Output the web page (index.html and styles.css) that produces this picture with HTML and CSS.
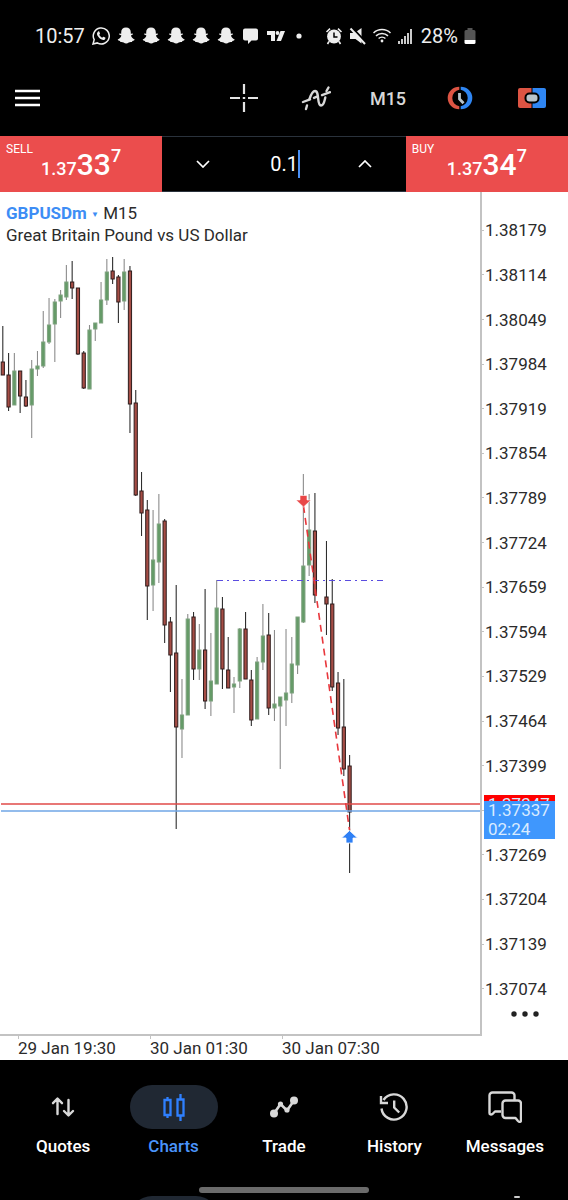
FILE: index.html
```html
<!DOCTYPE html>
<html lang="en">
<head>
  <meta charset="UTF-8">
  <title>GBPUSDm M15</title>
  <meta name="viewport" content="width=device-width, initial-scale=1">
  <link rel="stylesheet" href="styles.css">
</head>
<body>

<!-- Shared icons -->
<svg class="defs" aria-hidden="true">
  <symbol id="ghost" viewBox="0 0 18 18">
    <path fill="#eee" d="M9 .5c3 0 4.800 2 4.800 4.800v1.400l1.800-.3.500.9-2.100 1.200c.4 1.700 1.600 3.200 3.700 3.900-.1.900-1.200 1.300-2.300 1.500l-.4 1.100c-1.600-.2-2.400 0-3.200.6-1.700 1.300-3.500 1.300-5.200 0-.8-.6-1.600-.8-3.200-.6l-.4-1.100c-1.100-.2-2.200-.6-2.300-1.500 2.100-.7 3.300-2.200 3.700-3.900L1.900 7.300l.5-.9 1.800.3V5.300C4.200 2.500 6 .5 9 .5z"/>
  </symbol>
</svg>

<!-- Status bar -->
<div class="status">
  <span class="time">10:57</span>
  <svg class="s-icon" viewBox="0 0 18 18"><path fill="none" stroke="#eee" stroke-width="1.500" d="M1 17l1.200-4.300A8 8 0 1 1 5.300 15.900z"/><path fill="#eee" d="M6 4.700c.5-.5 1.100-.4 1.300.1l.7 1.600c.1.400-.6 1.100-.8 1.400.8 1.500 1.700 2.300 3.100 2.900.4-.5.9-1.100 1.200-1l1.700.8c.5.300.1 1.500-.4 1.900-1.300 1-3.200.4-4.700-.7C6.700 10.500 5.300 8.700 5 7.200c-.1-1 .4-2 1-2.500z"/></svg>
  <svg class="s-icon"><use href="#ghost"/></svg>
  <svg class="s-icon"><use href="#ghost"/></svg>
  <svg class="s-icon"><use href="#ghost"/></svg>
  <svg class="s-icon"><use href="#ghost"/></svg>
  <svg class="s-icon"><use href="#ghost"/></svg>
  <svg class="s-icon" viewBox="0 0 18 18"><path fill="#eee" d="M3 1.500h11a2 2 0 0 1 2 2v8a2 2 0 0 1-2 2h-4.500L6 17v-3.500H3a2 2 0 0 1-2-2v-8a2 2 0 0 1 2-2z"/></svg>
  <svg class="s-icon" viewBox="0 0 18 18"><path fill="#eee" d="M0 4h8v10H4V8H0z"/><circle cx="10.500" cy="6" r="1.900" fill="#eee"/><path fill="#eee" d="M13.500 4H18l-4 10H9.500z"/></svg>
  <svg class="s-icon" viewBox="0 0 18 18"><circle cx="7" cy="9" r="2.600" fill="#eee"/></svg>
  <div class="status-right">
    <svg class="s-icon" viewBox="0 0 18 18"><circle cx="9" cy="9.500" r="6.900" fill="#eee"/><path d="M9 5.500V10h3.500" fill="none" stroke="#000" stroke-width="1.500"/><path d="M1.500 5L5 1.700M16.500 5L13 1.700M4 14.500L2.500 17M14 14.500l1.500 2.500" stroke="#eee" stroke-width="1.600"/></svg>
    <svg class="s-icon" viewBox="0 0 18 18"><path fill="#eee" d="M1 6h4.500L12.500 1v15.500L6.500 12H1z"/><path d="M3 .5l15 16" stroke="#000" stroke-width="2"/><path d="M1.500 1.500l14.500 15.500" stroke="#eee" stroke-width="2"/></svg>
    <svg class="s-icon" viewBox="0 0 18 18"><g fill="none" stroke="#eee" stroke-width="1.500"><path d="M.5 6a12 12 0 0 1 17 0"/><path d="M3 8.900a8.500 8.500 0 0 1 12 0"/><path d="M5.600 11.500a5 5 0 0 1 6.800 0"/></g><circle cx="9" cy="14" r="1.400" fill="#eee"/></svg>
    <svg class="s-icon" viewBox="0 0 18 18"><path d="M2 17v-3M5 17v-5M8 17V9M11 17V6M14 17V2" stroke="#eee" stroke-width="1.700"/></svg>
    <span class="time">28%</span>
    <svg class="battery" viewBox="0 0 12 18"><path fill="#555" d="M3.500 1h5v2H10a1.500 1.500 0 0 1 1.500 1.500V13H.5V4.500A1.500 1.500 0 0 1 2 3h1.500z"/><path fill="#fff" d="M.5 13h11v2.500a1.500 1.500 0 0 1-1.500 1.500H2A1.500 1.500 0 0 1 .5 15.500z"/></svg>
  </div>
</div>

<!-- Toolbar -->
<header class="toolbar">
  <button class="menu" aria-label="Menu">
    <svg width="26" height="20" viewBox="0 0 26 20"><path d="M0 3h25M0 10h25M0 17h25" stroke="#fff" stroke-width="2.500"/></svg>
  </button>
  <button class="tool" aria-label="Crosshair">
    <svg width="28" height="28" viewBox="0 0 28 28"><path d="M14 0v10M14 18v10M0 14h10M18 14h10M12.800 14h2.400" stroke="#e4e4e4" stroke-width="2.200"/></svg>
  </button>
  <button class="tool" aria-label="Indicators">
    <svg width="30" height="26" viewBox="0 0 30 26"><g fill="none" stroke="#d8d8d8" stroke-width="2.400" stroke-linecap="round" stroke-linejoin="round"><path d="M5 24l1-3.500M8.500 14c1.500-4.500 3-8 5.500-8 4.800 0 1.500 14.500 6 14.500 3 0 3.500-5 4.300-8M25.500 6l2-3.500"/><path d="M2 17l7-2.600M13 12.900l3-1.200M21 10.200l8-3"/></g></svg>
  </button>
  <button class="tool period">M15</button>
  <button class="tool" aria-label="Pending order">
    <svg width="28" height="24" viewBox="0 0 28 24"><path fill="#dd5443" d="M13.300.8v3A8.300 8.300 0 0 0 13.300 20.200v3A11.600 11.200 0 0 1 13.300.8z"/><path fill="#2f86f3" d="M14.700.8v3a8.300 8.300 0 0 1 0 16.400v3A11.600 11.200 0 0 0 14.700.8z"/><path d="M13.500 7v6l4 4.300" fill="none" stroke="#b9c4cb" stroke-width="2.800"/></svg>
  </button>
  <button class="tool" aria-label="One click trading">
    <svg width="28" height="20" viewBox="0 0 28 20"><path fill="#dd5443" d="M2 0h11.500v20H2a2 2 0 0 1-2-2V2a2 2 0 0 1 2-2z"/><path fill="#2f86f3" d="M14.500 0H26a2 2 0 0 1 2 2v16a2 2 0 0 1-2 2H14.500z"/><rect x="7.500" y="5.500" width="13" height="9" rx="4" fill="#b9c4cb" stroke="#000" stroke-width="2"/></svg>
  </button>
</header>

<!-- One click trading panel -->
<section class="trade">
  <button class="deal">
    <span class="side">SELL</span>
    <span class="price"><span>1.37</span><b>33</b><i>7</i></span>
  </button>
  <div class="volume">
    <button aria-label="Decrease volume"><svg width="14" height="8" viewBox="0 0 14 8"><path d="M1 1l6 6 6-6" fill="none" stroke="#fff" stroke-width="1.700"/></svg></button>
    <div class="field"><input type="text" value="0.1" aria-label="Volume"><span class="caret"></span></div>
    <button aria-label="Increase volume"><svg width="14" height="8" viewBox="0 0 14 8"><path d="M1 7l6-6 6 6" fill="none" stroke="#fff" stroke-width="1.700"/></svg></button>
  </div>
  <button class="deal">
    <span class="side">BUY</span>
    <span class="price"><span>1.37</span><b>34</b><i>7</i></span>
  </button>
</section>

<!-- Chart -->
<main class="chart">
  <div class="plot">
    <svg class="candles" id="candles">
      <g id="bars"></g>
      <line x1="1" x2="100%" y1="612" y2="612" stroke="#e04a48" stroke-width="1.500"/>
      <line x1="1" x2="100%" y1="619" y2="619" stroke="#6fa6e6" stroke-width="1.600"/>
      <path d="M217 388.500h169" stroke="#5a4de0" stroke-dasharray="6 4 2 4"/>
      <path d="M303.500 314L349.500 638" stroke="#e8373c" stroke-width="1.600" stroke-dasharray="7 5"/>
      <path d="M300 303.500h7v4.500h4l-7.500 7-7.500-7h4z" fill="#e94747" stroke="#fff" stroke-width=".6"/>
      <path d="M346 651v-5h-4.500l8-7.500 8 7.500H353v5z" fill="#2f80f5" stroke="#fff" stroke-width=".8"/>
    </svg>
    <div class="title">
      <div class="line"><button class="symbol">GBPUSDm <small>▼</small></button> M15</div>
      <div class="line">Great Britain Pound vs US Dollar</div>
    </div>
  </div>
  <div class="prices">
    <ul id="prices"></ul>
    <div class="tag ask">1.37347</div>
    <div class="tag bid">1.37337<br>02:24</div>
    <button class="more" aria-label="More"><svg width="28" height="6" viewBox="0 0 28 6"><g fill="#222"><circle cx="3" cy="3" r="2.700"/><circle cx="14" cy="3" r="2.700"/><circle cx="25" cy="3" r="2.700"/></g></svg></button>
  </div>
  <ul class="times">
    <li>29 Jan 19:30</li>
    <li>30 Jan 01:30</li>
    <li>30 Jan 07:30</li>
  </ul>
</main>

<!-- Bottom navigation -->
<nav class="nav">
  <a href="#quotes">
    <span class="pill"><svg width="24" height="22" viewBox="0 0 24 22"><path d="M6.500 18V3M2 7.200L6.500 2.500 11 7.200M17.500 4v15M13 15l4.500 4.500L22 15" fill="none" stroke="#d8d8d8" stroke-width="2.400" stroke-linecap="round" stroke-linejoin="round"/></svg></span>
    Quotes
  </a>
  <a href="#charts" class="active">
    <span class="pill"><svg width="24" height="28" viewBox="0 0 24 28"><path d="M2.500 7h6v15h-6zM5.500 4v3M5.500 22v3M15.500 6.500h6v16h-6zM18.500 1v5.500M18.500 22.500V28" fill="none" stroke="#2f80ff" stroke-width="2.300"/></svg></span>
    Charts
  </a>
  <a href="#trade">
    <span class="pill"><svg width="30" height="24" viewBox="0 0 30 24"><path d="M5 18.500L11.500 9l6.500 6.500L25 5.500" fill="none" stroke="#d8d8d8" stroke-width="2.600"/><g fill="#d8d8d8"><circle cx="5" cy="18.500" r="4"/><circle cx="11.500" cy="9" r="2.600"/><circle cx="18" cy="15" r="2.600"/><circle cx="25" cy="5.500" r="4"/></g></svg></span>
    Trade
  </a>
  <a href="#history">
    <span class="pill"><svg width="30" height="30" viewBox="0 0 30 30"><path d="M2.500 16.500A12.600 12.600 0 1 0 4.500 8M2 4v7h7M15.200 8.500v7l5 5" fill="none" stroke="#d8d8d8" stroke-width="2.400"/></svg></span>
    History
  </a>
  <a href="#messages">
    <span class="pill"><svg width="34" height="32" viewBox="0 0 34 32"><g fill="none" stroke="#d8d8d8" stroke-width="2.400" stroke-linejoin="round"><path d="M13 20.500H7L4.500 23C3 24 1.500 23.500 1.500 22V4.500a3 3 0 0 1 3-3h19a3 3 0 0 1 3 3V9"/><path d="M17.500 9.500H30a3 3 0 0 1 3 3v16.500c0 2-1.500 2.500-3 1L27.500 27h-10a3 3 0 0 1-3-3V12.500a3 3 0 0 1 3-3z"/></g></svg></span>
    Messages
  </a>
</nav>

<div class="gesture"><span></span></div>
<div class="peek"><span></span><span class="pill"></span><span></span><span></span><span class="dot"></span></div>

<script src="chart.js"></script>
</body>
</html>
```
FILE: styles.css
```css
* { box-sizing: border-box; margin: 0; padding: 0; }

body {
  display: flex;
  flex-direction: column;
  min-height: 100vh;
  background: #000;
  color: #fff;
  font-family: Roboto, "Liberation Sans", sans-serif;
  overflow-x: hidden;
}

button, input {
  background: none;
  border: none;
  color: inherit;
  font: inherit;
}

button { cursor: pointer; }
ul { list-style: none; }
svg { display: block; }

.defs {
  position: absolute;
  width: 0;
  height: 0;
}

/* Status bar */
.status {
  display: flex;
  align-items: center;
  gap: 7px;
  height: 72px;
  padding-left: 35px;
}

.status-right {
  display: flex;
  align-items: center;
  gap: 6px;
  margin-left: 8px;
}

.time {
  font-size: 20px;
  color: #eee;
}

.s-icon {
  width: 18px;
  height: 18px;
  flex: none;
}

.battery {
  width: 12px;
  height: 18px;
}

/* Toolbar */
.toolbar {
  display: flex;
  align-items: center;
  height: 52px;
  margin-bottom: 12px;
}

.menu {
  margin-right: auto;
  padding: 12px 15px;
}

.tool {
  display: flex;
  align-items: center;
  justify-content: center;
  width: 72px;
  height: 52px;
}

.period {
  font-size: 18px;
  font-weight: 500;
  color: #d8d8d8;
}

/* Trade panel */
.trade {
  display: grid;
  grid-template-columns: 2fr 3fr 2fr;
  height: 56px;
}

.deal {
  display: flex;
  flex-direction: column;
  align-items: flex-start;
  background: #eb4d4d;
  padding: 6px;
}

.side {
  font-size: 12px;
  line-height: 14px;
}

.price {
  display: flex;
  align-items: baseline;
  align-self: center;
  margin-top: -6px;
  font-weight: 500;
}

.price span {
  font-size: 18px;
  line-height: 20px;
}

.price b {
  font-size: 30px;
  font-weight: 500;
  line-height: 30px;
}

.price i {
  align-self: flex-start;
  font-size: 18px;
  font-style: normal;
  line-height: 12px;
}

.volume {
  display: grid;
  grid-template-columns: 1fr 1fr 1fr;
  border-top: 1px solid #2a323c;
  border-bottom: 1px solid #2a323c;
}

.volume button, .field {
  display: flex;
  align-items: center;
  justify-content: center;
}

.field input {
  width: 30px;
  font-size: 20px;
  text-align: right;
  outline: none;
}

.caret {
  width: 2px;
  height: 28px;
  background: #4a90f5;
}

/* Chart */
.chart {
  flex: 1;
  display: grid;
  grid-template-columns: 1fr 86px;
  grid-template-rows: 1fr 24px;
  min-height: 868px;
  background: #fff;
  color: #2b2b2b;
  font-size: 17px;
}

.plot {
  position: relative;
  border-right: 2px solid #c3c3c3;
  border-bottom: 2px solid #c3c3c3;
}

.candles {
  width: 100%;
  height: 100%;
}

.title {
  position: absolute;
  top: 11px;
  left: 6px;
}

.line { line-height: 21px; }

.symbol {
  color: #3d8df5;
  font-weight: 700;
}

.symbol small { font-size: 8px; vertical-align: 2px; }

.prices {
  position: relative;
  display: flex;
  flex-direction: column;
  padding: 16px 0 19px;
}

.prices ul {
  flex: 1;
  display: flex;
  flex-direction: column;
}

.prices li {
  flex: 1;
  display: flex;
  align-items: center;
  padding-left: 3px;
  background: linear-gradient(#c3c3c3, #c3c3c3) left center / 2px 1px no-repeat;
}

.more { align-self: center; }

.tag {
  position: absolute;
  left: 2px;
  width: 71px;
  padding-left: 4px;
  color: #d9ebff;
  line-height: 19px;
}

.ask {
  top: 603px;
  background: #f00;
}

.bid {
  top: 609px;
  background: #3f97fd;
}

.times {
  grid-column: 1 / 3;
  display: flex;
  padding-left: 18px;
}

.times li {
  width: 132px;
  line-height: 24px;
  background: linear-gradient(#c3c3c3, #c3c3c3) left top / 1px 3px no-repeat;
}

/* Bottom navigation */
.nav {
  display: flex;
  padding: 25px 8px 0;
}

.nav a {
  flex: 1;
  display: flex;
  flex-direction: column;
  align-items: center;
  gap: 7px;
  color: #fff;
  font-size: 17px;
  font-weight: 500;
  line-height: 20px;
  text-decoration: none;
}

.pill {
  display: flex;
  align-items: center;
  justify-content: center;
  width: 88px;
  height: 44px;
  border-radius: 22px;
}

.active .pill, .peek .pill { background: #202833; }
.nav .active { color: #4a94fb; }

.gesture {
  display: flex;
  justify-content: center;
  padding: 31px 0 3px;
}

.gesture span {
  width: 30%;
  height: 6px;
  border-radius: 3px;
  background: #6b6b6b;
}

/* Edge of the row below the gesture bar */
.peek {
  display: grid;
  grid-template-columns: repeat(5, 1fr);
  justify-items: center;
  align-items: end;
  height: 4px;
  padding: 0 8px;
  overflow: hidden;
}

.peek .pill { margin-bottom: -5px; }

.peek .dot {
  align-self: start;
  width: 6px;
  height: 2px;
  margin-left: 24px;
  border-radius: 1px;
  background: #ccc;
}
```
FILE: chart.js
```javascript
// [high, body top, body bottom, low, up]
const data = [
  [134, 170, 183, 183, 0], [161, 183, 215, 219, 0], [161, 179, 213, 213, 1], [179, 179, 204, 221, 0],
  [188, 205, 214, 215, 0], [168, 177, 213, 246, 1], [159, 174, 177, 184, 1], [119, 150, 174, 176, 1],
  [106, 133, 150, 152, 1], [107, 110, 132, 170, 1], [98, 103, 109, 126, 1], [73, 90, 105, 108, 1],
  [69, 90, 96, 107, 0], [96, 96, 162, 163, 0], [159, 161, 196, 197, 0], [133, 138, 197, 197, 1],
  [131, 131, 137, 149, 1], [90, 108, 131, 131, 1], [67, 80, 108, 113, 1], [65, 79, 87, 92, 0],
  [83, 85, 110, 131, 0], [67, 80, 109, 118, 1], [74, 79, 212, 241, 0], [198, 211, 303, 304, 0],
  [280, 299, 321, 344, 0], [308, 318, 394, 428, 0], [318, 368, 393, 419, 1], [302, 332, 370, 391, 1],
  [327, 329, 433, 451, 0], [425, 430, 463, 500, 0], [393, 461, 535, 637, 0], [487, 523, 537, 566, 1],
  [422, 427, 523, 523, 1], [420, 425, 477, 488, 0], [432, 458, 477, 488, 1], [397, 458, 509, 517, 0],
  [441, 489, 509, 524, 1], [388, 416, 492, 492, 1], [405, 417, 477, 497, 0], [445, 478, 496, 496, 0],
  [485, 492, 495, 521, 1], [436, 437, 489, 496, 1], [420, 437, 487, 487, 0], [478, 488, 528, 534, 0],
  [465, 470, 527, 527, 1], [412, 444, 470, 478, 1], [421, 443, 516, 523, 0], [438, 512, 516, 529, 1],
  [505, 505, 514, 577, 1], [437, 501, 508, 534, 1], [445, 472, 501, 511, 1], [425, 425, 473, 482, 1],
  [282, 374, 430, 431, 1], [302, 338, 373, 384, 1], [301, 339, 403, 411, 0], null,
  [349, 405, 412, 443, 0], [387, 412, 495, 499, 0], [480, 491, 536, 543, 0], [487, 535, 577, 584, 0],
  [563, 574, 620, 681, 0]
];

const step = 5.78;
let bars = '';
data.forEach((d, i) => {
  if (!d) return;
  const [high, top, bottom, low, up] = d;
  const x = 2.8 + i * step;
  const wick = up ? '#8c8c8c' : '#2e2e2e';
  const fill = up ? '#659b68' : '#a54d45';
  const edge = up ? '#7ea27f' : '#2e1c1c';
  bars += `<path d="M${x} ${high}V${low}" stroke="${wick}" stroke-width="1.1"/>`;
  bars += `<rect x="${x - 1.6}" y="${top}" width="3.2" height="${bottom - top}" fill="${fill}" stroke="${edge}"/>`;
});
document.getElementById('bars').innerHTML = bars;

// Price scale, 65 points per row
let rows = '';
for (let p = 138179; p >= 137074; p -= 65) {
  rows += `<li>${p === 137334 ? '' : (p / 100000).toFixed(5)}</li>`;
}
document.getElementById('prices').innerHTML = rows;
```
